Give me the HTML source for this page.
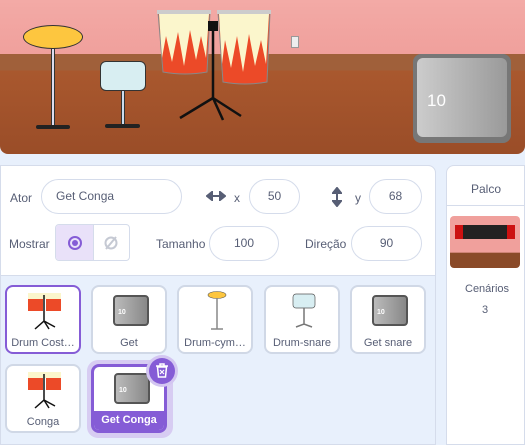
<!DOCTYPE html><html><head><style>
*{box-sizing:border-box;margin:0;padding:0}
body{width:525px;height:445px;overflow:hidden;background:#e8f0fc;font-family:"Liberation Sans",sans-serif;color:#575e75;position:relative}
.abs{position:absolute}
.stage{left:0;top:0;width:525px;height:154px;border-radius:0 0 8px 8px;overflow:hidden;background:linear-gradient(#f3aaa6 0,#f0a09c 54px,#9a5a32 55px,#a0603a 70px,#a9582e 71px,#9a4d28 154px)}
.info{left:0;top:165px;width:436px;height:280px;background:#e8f0fc;border:1px solid #d5dceb;border-radius:0 8px 0 0}
.infotop{left:0;top:165px;width:436px;height:111px;background:#fff;border:1px solid #d5dceb;border-radius:0 8px 0 0}
.pill{position:absolute;border:1px solid #d5dceb;border-radius:18px;background:#fff;font-size:12px;color:#575e75;height:35px;line-height:33px;text-align:center}
.lbl{position:absolute;font-size:12px}
.tile{position:absolute;width:76px;height:69px;background:#fff;border:2px solid #d0d8e6;border-radius:8px;font-size:11px;text-align:center}
.tile span{position:absolute;bottom:3px;left:0;right:0}
.thumb{position:absolute;left:20px;top:8px;width:36px;height:31px;border-radius:4px;background:linear-gradient(90deg,#bbb,#888);border:2px solid #555;color:#fff;font-size:7px;font-weight:bold;padding:12px 0 0 3px;text-align:left}
.stagep{left:446px;top:165px;width:79px;height:280px;background:#fff;border:1px solid #d5dceb;border-radius:8px 0 0 0}
</style></head><body>
<div class="abs stage">
 <div class="abs" style="left:0;top:54px;width:525px;height:16px;background:#a0603a"></div>
 <div class="abs" style="left:23px;top:25px;width:60px;height:24px;border-radius:50%;background:#fdc63f;border:1px solid #333"></div>
 <div class="abs" style="left:51px;top:48px;width:4px;height:80px;background:#dde;border:1px solid #333"></div>
 <div class="abs" style="left:36px;top:125px;width:34px;height:4px;background:#222;border-radius:2px"></div>
 <div class="abs" style="left:100px;top:61px;width:46px;height:30px;border-radius:6px;background:#d8eef2;border:1px solid #333"></div>
 <div class="abs" style="left:121px;top:90px;width:4px;height:36px;background:#cde;border:1px solid #333"></div>
 <div class="abs" style="left:105px;top:124px;width:35px;height:4px;background:#222;border-radius:2px"></div>
 <svg class="abs" style="left:155px;top:8px" width="120" height="80">
  <path d="M3 4H55L52 64Q30 68 8 64Z" fill="#ec4a28" stroke="#888"/>
  <path d="M4 6H54L51 50L46 28L41 52L35 22L29 58L23 24L17 54L11 28L7 50Z" fill="#fbf6cc"/>
  <path d="M63 4H115L112 74Q90 78 68 74Z" fill="#ec4a28" stroke="#888"/>
  <path d="M64 6H114L111 56L106 32L100 58L94 26L88 64L82 28L76 60L70 32L67 56Z" fill="#fbf6cc"/>
  <rect x="2" y="2" width="54" height="4" fill="#ccc"/><rect x="62" y="2" width="54" height="4" fill="#ccc"/>
 </svg>
 <svg class="abs" style="left:175px;top:20px" width="70" height="102"><rect x="33" y="1" width="10" height="10" fill="#111"/><path d="M38 5V78L5 98M38 78L48 100M38 78L66 96" stroke="#111" stroke-width="2.5" fill="none"/></svg>
 <div class="abs" style="left:291px;top:36px;width:8px;height:12px;background:#eee;border:1px solid #999"></div>
 <div class="abs" style="left:413px;top:54px;width:98px;height:89px;border-radius:8px;background:#777"></div>
 <div class="abs" style="left:417px;top:58px;width:90px;height:79px;border-radius:6px;background:linear-gradient(90deg,#ccc,#9a9a9a);color:#fff;font-size:17px;padding:33px 0 0 10px">10</div>
</div>
<div class="abs info"></div>
<div class="abs infotop"></div>
<div class="lbl" style="left:10px;top:191px">Ator</div>
<div class="pill" style="left:41px;top:179px;width:141px;text-align:left;padding-left:14px">Get Conga</div>
<svg class="abs" style="left:206px;top:191px" width="20" height="10"><path d="M1 5H19M1 5L6 1V9ZM19 5L14 1V9Z" stroke="#575e75" stroke-width="2" fill="#575e75"/></svg>
<div class="lbl" style="left:234px;top:191px">x</div>
<div class="pill" style="left:249px;top:179px;width:51px">50</div>
<svg class="abs" style="left:332px;top:187px" width="10" height="20"><path d="M5 1V19M5 1L1 6H9ZM5 19L1 14H9Z" stroke="#575e75" stroke-width="2" fill="#575e75"/></svg>
<div class="lbl" style="left:355px;top:191px">y</div>
<div class="pill" style="left:369px;top:179px;width:53px">68</div>
<div class="lbl" style="left:9px;top:237px">Mostrar</div>
<div class="abs" style="left:55px;top:224px;width:75px;height:37px;border:1px solid #d5dceb;border-radius:4px;background:#fff;overflow:hidden">
 <div style="width:38px;height:100%;background:#e9e1f9;border-right:1px solid #d5dceb;display:flex;align-items:center;justify-content:center"><div style="width:14px;height:14px;border-radius:50%;border:2px solid #855cd6;display:flex;align-items:center;justify-content:center"><div style="width:6px;height:6px;border-radius:50%;background:#855cd6"></div></div></div>
 <svg class="abs" style="left:47px;top:10px" width="16" height="16"><circle cx="8" cy="8" r="5.5" stroke="#c5c9d3" stroke-width="2" fill="none"/><path d="M3 14L13 2" stroke="#c5c9d3" stroke-width="2"/></svg>
</div>
<div class="lbl" style="left:156px;top:237px">Tamanho</div>
<div class="pill" style="left:209px;top:226px;width:70px">100</div>
<div class="lbl" style="left:305px;top:237px">Direção</div>
<div class="pill" style="left:351px;top:226px;width:71px">90</div>

<div class="tile" style="left:5px;top:285px;border-color:#855cd6;border-width:2px"><svg class="abs" style="left:20px;top:4px" width="36" height="40"><rect x="1" y="2" width="15" height="18" fill="#ec4a28"/><rect x="19" y="2" width="15" height="18" fill="#ec4a28"/><rect x="1" y="2" width="33" height="6" fill="#fbf6cc"/><path d="M17 4V30L8 38M17 30L22 38M17 30L28 36" stroke="#111" stroke-width="1.5" fill="none"/></svg><span>Drum Cost…</span></div>
<div class="tile" style="left:91px;top:285px"><div class="thumb">10</div><span>Get</span></div>
<div class="tile" style="left:177px;top:285px"><svg class="abs" style="left:24px;top:4px" width="30" height="40"><ellipse cx="14" cy="4" rx="9" ry="3.5" fill="#fdc63f" stroke="#555" stroke-width=".6"/><path d="M14 7V38M8 38H20" stroke="#888" stroke-width="1.5"/></svg><span>Drum-cym…</span></div>
<div class="tile" style="left:264px;top:285px"><svg class="abs" style="left:24px;top:4px" width="30" height="40"><rect x="3" y="3" width="22" height="14" rx="3" fill="#d8eef2" stroke="#555" stroke-width=".7"/><path d="M14 17V34M6 36L14 33L22 36" stroke="#777" stroke-width="1.5" fill="none"/></svg><span>Drum-snare</span></div>
<div class="tile" style="left:350px;top:285px"><div class="thumb">10</div><span>Get snare</span></div>
<div class="tile" style="left:5px;top:364px"><svg class="abs" style="left:20px;top:4px" width="36" height="40"><rect x="1" y="2" width="15" height="18" fill="#ec4a28"/><rect x="19" y="2" width="15" height="18" fill="#ec4a28"/><rect x="1" y="2" width="33" height="6" fill="#fbf6cc"/><path d="M17 4V30L8 38M17 30L22 38M17 30L28 36" stroke="#111" stroke-width="1.5" fill="none"/></svg><span>Conga</span></div>
<div class="abs" style="left:87px;top:360px;width:86px;height:78px;border-radius:11px;background:#d7ccf2"></div>
<div class="tile" style="left:91px;top:364px;border-color:#855cd6;border-width:3px;overflow:hidden"><div class="thumb" style="top:6px">10</div><div class="abs" style="left:0;right:0;bottom:0;height:19px;background:#855cd6"></div><span style="color:#fff;font-weight:bold;bottom:4px">Get Conga</span></div>
<div class="abs" style="left:146px;top:355px;width:32px;height:32px;border-radius:50%;background:#d3c6f1"></div>
<div class="abs" style="left:149px;top:358px;width:26px;height:26px;border-radius:50%;background:#855cd6"></div>
<svg class="abs" style="left:155px;top:363px" width="14" height="16"><path d="M1 3H13M5 3V1H9V3M2.5 4L3.5 14H10.5L11.5 4Z" stroke="#fff" stroke-width="1.5" fill="none"/><path d="M5 7L9 11M9 7L5 11" stroke="#fff" stroke-width="1.2"/></svg>

<div class="abs stagep"></div>
<div class="lbl" style="left:471px;top:182px">Palco</div>
<div class="abs" style="left:446px;top:205px;width:79px;height:1px;background:#d5dceb"></div>
<div class="abs" style="left:450px;top:216px;width:70px;height:52px;border-radius:4px;overflow:hidden;background:linear-gradient(#f0a09c 70%,#8a4a28 71%)"><div class="abs" style="left:5px;top:9px;width:60px;height:14px;background:#c11"></div><div class="abs" style="left:13px;top:9px;width:44px;height:14px;background:#222"></div></div>
<div class="lbl" style="left:465px;top:283px;font-size:11px">Cenários</div>
<div class="lbl" style="left:482px;top:304px;font-size:11px">3</div>
</body></html>
